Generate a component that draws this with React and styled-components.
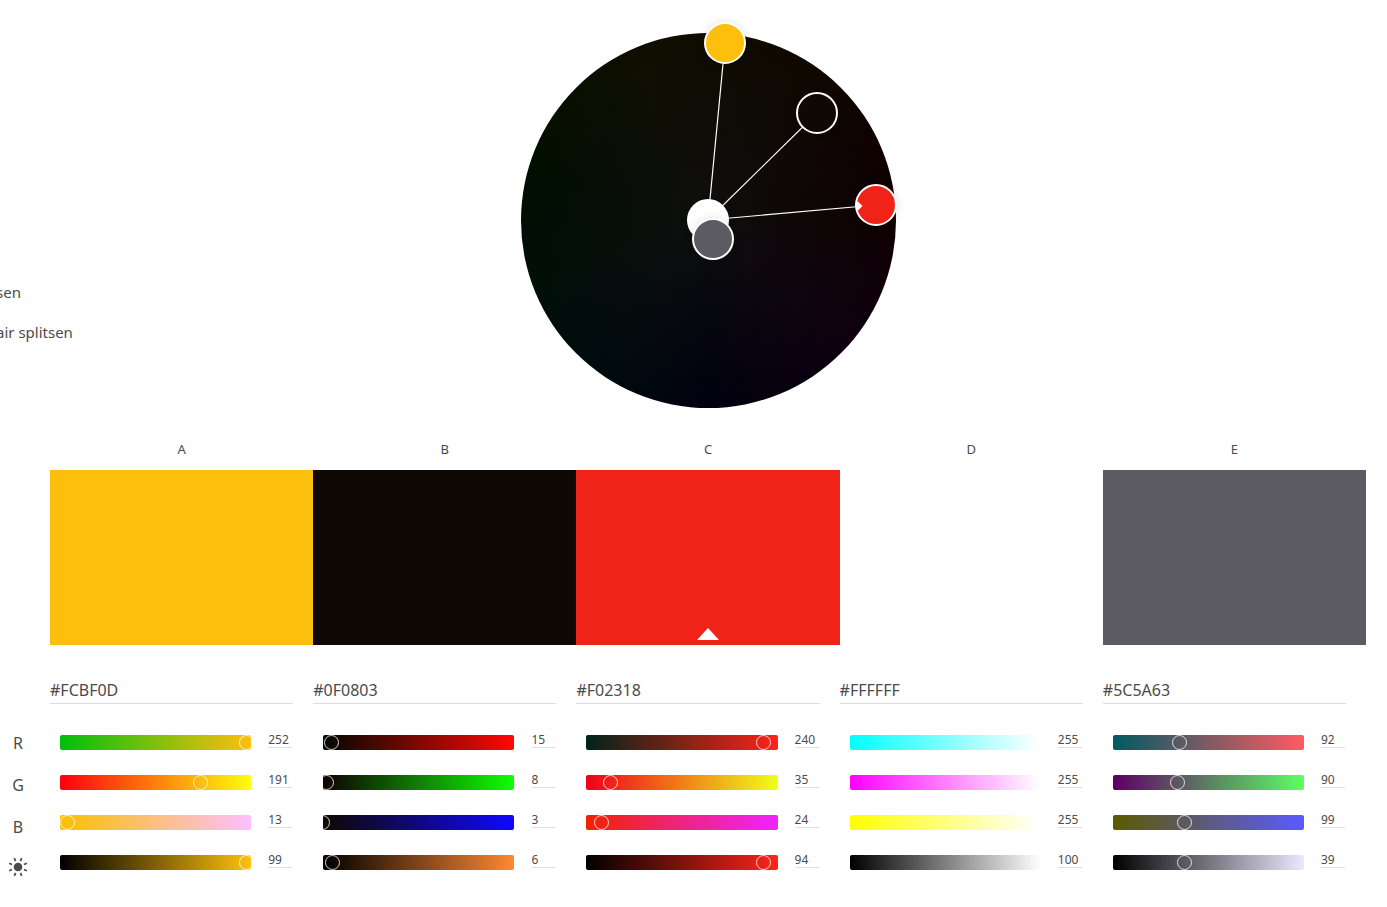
import React, { useState } from "react";
import styled, { createGlobalStyle } from "styled-components";

const GlobalStyle = createGlobalStyle`
  *, *::before, *::after { box-sizing: border-box; }
  body {
    margin: 0;
    background: #fff;
    color: #4b4b4b;
    font-family: "Noto Sans", "Open Sans", sans-serif;
    overflow-x: hidden;
  }
  button, input { font: inherit; color: inherit; }
`;

const Page = styled.main`
  padding-right: 21px;
`;

const WheelSection = styled.section`
  display: grid;
  grid-template-columns: 1fr 375px 1fr;
  padding: 33px 0 0 50px;
`;

const HarmonyList = styled.ul`
  list-style: none;
  margin: 239px 0 0 -54px;
  padding: 0;
  font-size: 15px;
  line-height: 40px;
  white-space: nowrap;
`;

const Wheel = styled.div`
  position: relative;
  height: 375px;
  border-radius: 50%;
  background:
    radial-gradient(circle closest-side, #0f0f0e 0%, rgba(13, 13, 13, 0.6) 40%, rgba(12, 12, 12, 0) 100%),
    conic-gradient(
      #0f0c00 0deg, #0f0800 35deg, #0f0000 75deg, #0f0003 95deg,
      #0f000f 130deg, #00000f 180deg, #000a0f 210deg, #000f0a 245deg,
      #000f00 285deg, #0f0f00 335deg, #0f0c00 360deg
    );
`;

const Spokes = styled.svg`
  position: absolute;
  inset: 0;
  width: 100%;
  height: 100%;
`;

const Handle = styled.button`
  position: absolute;
  left: ${(p) => p.$x - 21}px;
  top: ${(p) => p.$y - 21}px;
  width: 42px;
  height: 42px;
  padding: 0;
  border: 2px solid #fff;
  border-radius: 50%;
  background: ${(p) => p.$color};
  box-shadow: 0 0 8px rgba(0, 0, 0, 0.12);
  cursor: grab;

  svg { display: block; }
`;

const Swatches = styled.section`
  display: grid;
  grid-template-columns: repeat(5, 1fr);
  padding: 31px 0 0 50px;
`;

const SwatchColumn = styled.div`
  display: flex;
  flex-direction: column;
  gap: 11px;
`;

const SwatchName = styled.span`
  font-size: 13px;
  line-height: 20px;
  text-align: center;
`;

const Swatch = styled.button`
  display: flex;
  align-items: flex-end;
  justify-content: center;
  height: 175px;
  padding: 0 0 5px;
  border: 0;
  background: ${(p) => p.$color};

  svg { display: block; }
`;

const Controls = styled.section`
  display: grid;
  grid-template-columns: 50px repeat(5, 1fr);
  padding: 31px 0 20px;
`;

const ChannelNames = styled.div`
  width: 36px;
  padding-top: 46px;
  font-size: 16px;
  line-height: 42px;
  text-align: center;
`;

const ChannelName = styled.div``;

const BrightnessName = styled.div`
  display: flex;
  align-items: center;
  justify-content: center;
  height: 38px;
`;

const ColorPanel = styled.div`
  padding-right: 20px;
`;

const HexInput = styled.input`
  display: block;
  width: 100%;
  height: 28px;
  padding: 0;
  border: 0;
  border-bottom: 1px solid #dedede;
  background: none;
  font-size: 16px;
  outline: none;
`;

const Sliders = styled.div`
  display: flex;
  flex-direction: column;
  gap: 25px;
  padding: 31px 1px 0 10px;
`;

const SliderRow = styled.div`
  display: flex;
  align-items: flex-end;
  gap: 17px;
  height: 15px;
`;

const Track = styled.div`
  flex: 1;
  min-width: 0;
  height: 15px;
  border-radius: 2px;
  overflow: hidden;
  background: linear-gradient(to right, ${(p) => p.$from}, ${(p) => p.$to});
`;

const Range = styled.input`
  appearance: none;
  display: block;
  width: calc(100% + 15px);
  height: 15px;
  margin: 0 0 0 -10px;
  background: none;
  outline: none;

  &::-webkit-slider-runnable-track {
    height: 15px;
    background: none;
  }
  &::-webkit-slider-thumb {
    appearance: none;
    width: 15px;
    height: 15px;
    border: 1px solid rgba(255, 255, 255, 0.8);
    border-radius: 50%;
    background: none;
  }
`;

const ValueInput = styled.input`
  width: 24px;
  height: 17px;
  margin-bottom: 2px;
  padding: 0;
  border: 0;
  border-bottom: 1px solid #dedede;
  background: none;
  font-size: 12px;
  line-height: 16px;
  outline: none;
`;

const palette = [
  { name: "A", hex: "#FCBF0D", rgb: [252, 191, 13], brightness: 99, x: 204, y: 10 },
  { name: "B", hex: "#0F0803", rgb: [15, 8, 3], brightness: 6, x: 296, y: 80 },
  { name: "C", hex: "#F02318", rgb: [240, 35, 24], brightness: 94, x: 355, y: 172, base: true },
  { name: "D", hex: "#FFFFFF", rgb: [255, 255, 255], brightness: 100, x: 187, y: 187 },
  { name: "E", hex: "#5C5A63", rgb: [92, 90, 99], brightness: 39, x: 192, y: 206 },
];

const css = (rgb) => `rgb(${rgb.join(", ")})`;

const channelsOf = ({ rgb, brightness }) => {
  const peak = Math.max(...rgb);
  const channels = ["R", "G", "B"].map((name, i) => ({
    name,
    value: rgb[i],
    max: 255,
    from: css(rgb.map((v, j) => (j === i ? 0 : v))),
    to: css(rgb.map((v, j) => (j === i ? 255 : v))),
  }));
  return [
    ...channels,
    {
      name: "brightness",
      value: brightness,
      max: 100,
      from: "#000",
      to: css(rgb.map((v) => Math.round((v * 255) / peak))),
    },
  ];
};

function Sun() {
  return (
    <svg width="20" height="20" viewBox="0 0 20 20" aria-label="Brightness" role="img">
      <circle cx="10" cy="10" r="4.3" fill="#4b4b4b" />
      {[22.5, 67.5, 112.5, 157.5, 202.5, 247.5, 292.5, 337.5].map((angle) => (
        <line
          key={angle}
          x1="10" y1="0.4" x2="10" y2="3.6"
          stroke="#4b4b4b" strokeWidth="1.7"
          transform={`rotate(${angle} 10 10)`}
        />
      ))}
    </svg>
  );
}

function Channel({ owner, channel }) {
  const [value, setValue] = useState(channel.value);
  const update = (e) => setValue(Number(e.target.value) || 0);
  return (
    <SliderRow>
      <Track $from={channel.from} $to={channel.to}>
        <Range
          type="range" min="0" max={channel.max} value={value} onChange={update}
          aria-label={`${owner} ${channel.name}`}
        />
      </Track>
      <ValueInput
        type="text" value={value} onChange={update}
        aria-label={`${owner} ${channel.name} value`}
      />
    </SliderRow>
  );
}

export default function App() {
  return (
    <Page>
      <GlobalStyle />
      <WheelSection>
        <HarmonyList>
          <li>sen</li>
          <li>air splitsen</li>
        </HarmonyList>
        <Wheel>
          <Spokes viewBox="0 0 375 375" stroke="#fff" strokeWidth="1.2" aria-hidden="true">
            {palette.map((c) => (
              <line key={c.name} x1="187" y1="187" x2={c.x} y2={c.y} />
            ))}
          </Spokes>
          {palette.map((c) => (
            <Handle key={c.name} type="button" $x={c.x} $y={c.y} $color={c.hex} aria-label={`Color ${c.name}`}>
              {c.base && (
                <svg width="38" height="38" viewBox="0 0 38 38">
                  <path d="M0 16 L1 15.5 L5.5 20 L1 24.5 L0 24 Z" fill="#fff" />
                </svg>
              )}
            </Handle>
          ))}
        </Wheel>
      </WheelSection>

      <Swatches>
        {palette.map((c) => (
          <SwatchColumn key={c.name}>
            <SwatchName>{c.name}</SwatchName>
            <Swatch type="button" $color={c.hex} aria-label={`Swatch ${c.name}`}>
              {c.base && (
                <svg width="22" height="12" viewBox="0 0 22 12">
                  <path d="M11 0 L22 12 H0 Z" fill="#fff" />
                </svg>
              )}
            </Swatch>
          </SwatchColumn>
        ))}
      </Swatches>

      <Controls>
        <ChannelNames>
          <ChannelName>R</ChannelName>
          <ChannelName>G</ChannelName>
          <ChannelName>B</ChannelName>
          <BrightnessName><Sun /></BrightnessName>
        </ChannelNames>
        {palette.map((c) => (
          <ColorPanel key={c.name}>
            <HexInput type="text" defaultValue={c.hex} aria-label={`Hex ${c.name}`} />
            <Sliders>
              {channelsOf(c).map((channel) => (
                <Channel key={channel.name} owner={c.name} channel={channel} />
              ))}
            </Sliders>
          </ColorPanel>
        ))}
      </Controls>
    </Page>
  );
}
